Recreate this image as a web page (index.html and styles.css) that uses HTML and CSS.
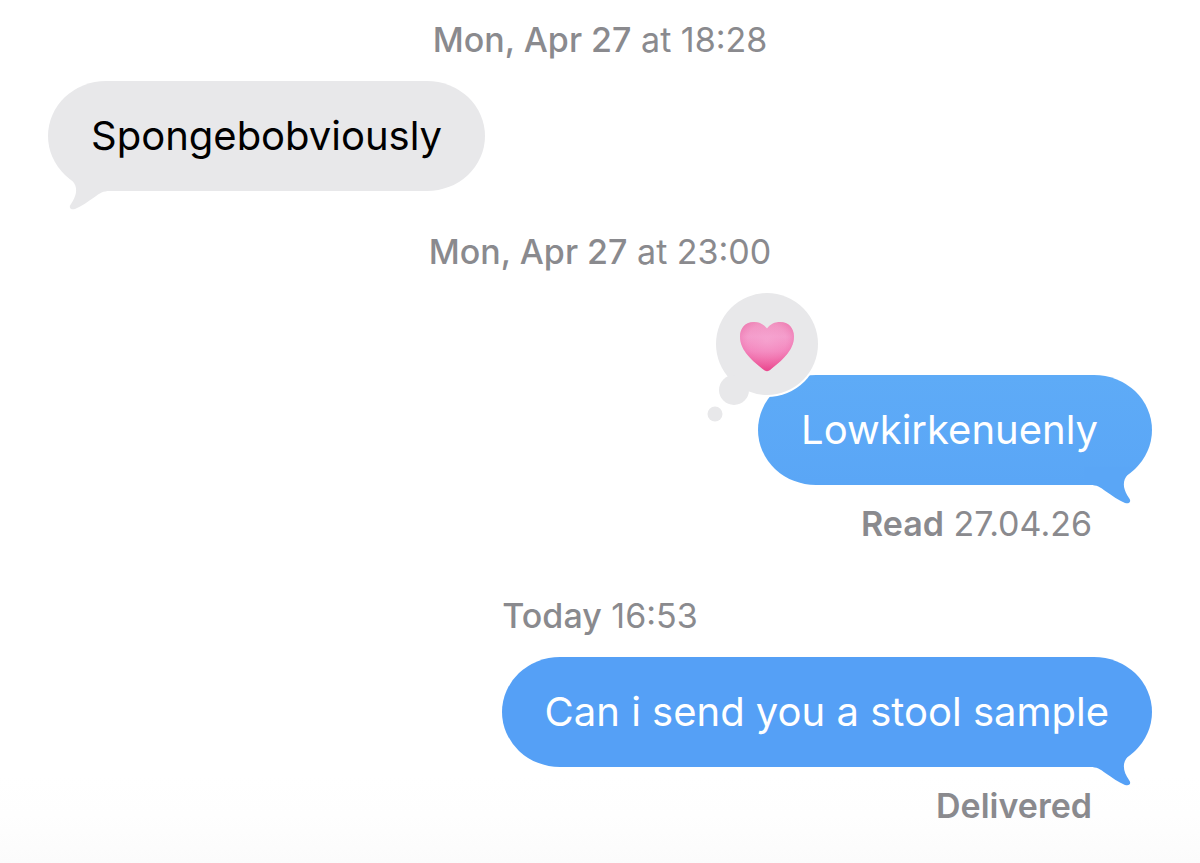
FILE: index.html
```html
<!DOCTYPE html>
<html lang="en">
<head>
<meta charset="utf-8">
<meta name="viewport" content="width=device-width, initial-scale=1">
<title>Messages</title>
<link rel="stylesheet" href="styles.css">
</head>
<body>
<main class="thread">
  <time class="stamp"><b>Mon, Apr 27</b> at 18:28</time>
  <div class="bubble bubble-in">
    <p class="text">Spongebobviously</p>
    <svg class="tail" viewBox="0 0 44 50" aria-hidden="true"><path d="M-6 1C-2 6 0 7 2 10C6 16 4 24 -1 31C-3.500 34 -2 37.500 3 36C10 33 16 28.500 22 24.500C28 20 31 18 38 18H44V0H-6Z"/></svg>
  </div>

  <time class="stamp stamp-next"><b>Mon, Apr 27</b> at 23:00</time>
  <div class="bubble bubble-out bubble-reacted">
    <p class="text">Lowkirkenuenly</p>
    <svg class="tail" viewBox="0 0 44 50" aria-hidden="true"><path d="M-6 1C-2 6 0 7 2 10C6 16 4 24 -1 31C-3.500 34 -2 37.500 3 36C10 33 16 28.500 22 24.500C28 20 31 18 38 18H44V0H-6Z"/></svg>
    <svg class="reaction" viewBox="0 0 114 134" role="img" aria-label="Pink heart">
      <defs>
        <linearGradient id="heart-base" x1="0" y1="0" x2="0" y2="1">
          <stop offset="0" stop-color="#f08fbc"/>
          <stop offset=".3" stop-color="#f59fcd"/>
          <stop offset=".6" stop-color="#f47fb9"/>
          <stop offset="1" stop-color="#ec3d84"/>
        </linearGradient>
        <radialGradient id="heart-glow" cx=".5" cy=".38" r=".58">
          <stop offset="0" stop-color="#f6a8d2" stop-opacity=".6"/>
          <stop offset=".6" stop-color="#f39bca" stop-opacity=".3"/>
          <stop offset="1" stop-color="#e8559a" stop-opacity=".5"/>
        </radialGradient>
      </defs>
      <circle cx="60" cy="52" r="53" fill="#fff"/>
      <g fill="#e8e8ea">
        <circle cx="60" cy="52" r="51"/>
        <circle cx="27" cy="98" r="15"/>
        <circle cx="8" cy="122" r="7.500"/>
      </g>
      <path fill="url(#heart-base)" d="M60 36.500C56.500 32 52 30 47 30C38.500 30 33 36 33 44.500C33 59 46 69 57 78C59 79.500 61 79.500 63 78C74 69 87 59 87 44.500C87 36 81.500 30 73 30C68 30 63.500 32 60 36.500Z"/>
      <path fill="url(#heart-glow)" d="M60 36.500C56.500 32 52 30 47 30C38.500 30 33 36 33 44.500C33 59 46 69 57 78C59 79.500 61 79.500 63 78C74 69 87 59 87 44.500C87 36 81.500 30 73 30C68 30 63.500 32 60 36.500Z"/>
    </svg>
  </div>
  <p class="receipt"><b>Read</b> 27.04.26</p>

  <time class="stamp stamp-today"><b>Today</b> 16:53</time>
  <div class="bubble bubble-out bubble-latest">
    <p class="text">Can i send you a stool sample</p>
    <svg class="tail" viewBox="0 0 44 50" aria-hidden="true"><path d="M-6 1C-2 6 0 7 2 10C6 16 4 24 -1 31C-3.500 34 -2 37.500 3 36C10 33 16 28.500 22 24.500C28 20 31 18 38 18H44V0H-6Z"/></svg>
  </div>
  <p class="receipt"><b>Delivered</b></p>
</main>
</body>
</html>
```
FILE: styles.css
```css
* {
  box-sizing: border-box;
}

body {
  margin: 0;
  min-height: 100vh;
  background: linear-gradient(to top, #fbfbfb, #fefefe 48px, #fff 88px);
  font-family: Inter, "Liberation Sans", sans-serif;
}

.thread {
  display: flex;
  flex-direction: column;
  padding: 20px 48px 32px;
}

.stamp,
.receipt {
  margin: 0;
  color: #8a8a8e;
  font-size: 34px;
  line-height: 40px;
}

.stamp {
  align-self: center;
}

.stamp b {
  font-weight: 500;
}

.receipt b {
  font-weight: 600;
}

.stamp-next {
  margin-top: 41px;
}

.stamp-today {
  margin-top: 52px;
}

.receipt {
  align-self: flex-end;
  margin-top: 19px;
  padding-right: 60px;
}

.bubble {
  position: relative;
  margin-top: 21px;
  padding: 29px 43px;
  border-radius: 58px / 55px;
}

.bubble-in {
  align-self: flex-start;
  background: #e8e8ea;
  color: #000;
  fill: #e8e8ea;
}

.bubble-out {
  align-self: flex-end;
  background: linear-gradient(#5eabf7, #5aa6f6);
  color: #fff;
  fill: #5aa6f6;
}

.bubble-latest {
  background: #55a0f6;
  fill: #55a0f6;
}

.bubble-reacted {
  margin-top: 103px;
  padding-right: 54px;
}

.text {
  margin: 0;
  font-size: 40px;
  line-height: 52px;
}

.tail {
  position: absolute;
  bottom: -32px;
  left: 24px;
  width: 44px;
  height: 50px;
  overflow: visible;
}

.bubble-out .tail {
  right: 24px;
  left: auto;
  transform: scaleX(-1);
}

.reaction {
  position: absolute;
  top: -83px;
  left: -51px;
  width: 114px;
  height: 134px;
  overflow: visible;
}
```
